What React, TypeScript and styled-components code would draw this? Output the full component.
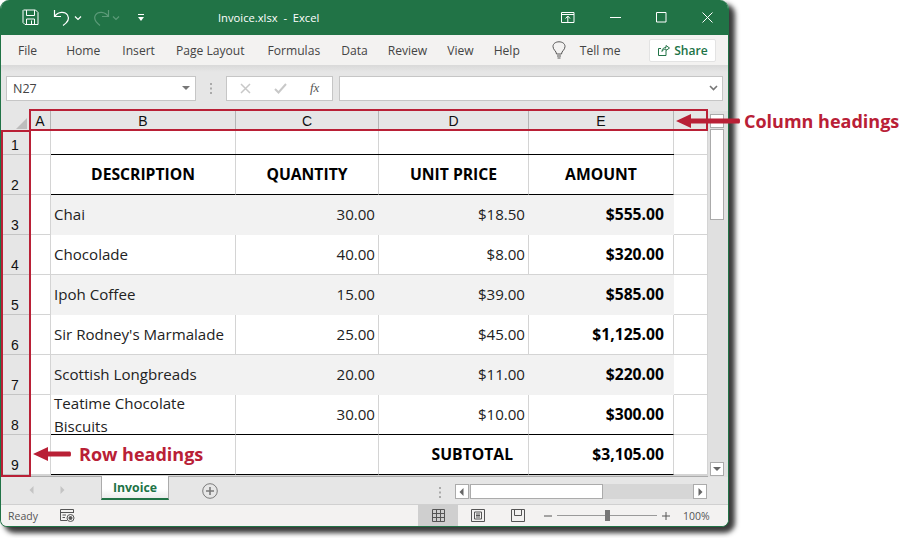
import styled, {createGlobalStyle} from 'styled-components'

const UI_FONT = '"Open Sans", "Noto Sans", sans-serif'
const GREEN = '#217346'
const RED = '#b92036'

const Global = createGlobalStyle`
  html, body { margin: 0; padding: 0; background: #fff; }
  body { font-family: ${UI_FONT}; }
`

const Page = styled.div`
  position: relative;
  width: 900px;
  height: 538px;
  overflow: hidden;
`

const Window = styled.div`
  width: 729px;
  height: 527px;
  display: flex;
  flex-direction: column;
  background: #e6e6e6;
  border-radius: 9px 9px 7px 7px;
  border: 1px solid ${GREEN};
  border-width: 0 1px 1px 1px;
  box-sizing: border-box;
  overflow: hidden;
`

const Shadow = styled.div`
  border-radius: 9px;
  width: 729px;
  height: 527px;
  box-shadow: 5px 5px 5px 1px rgba(25, 25, 25, 0.85);
`

const TitleBar = styled.div`
  height: 35px;
  flex: none;
  background: ${GREEN};
  display: flex;
  align-items: center;
  color: #fff;
  padding-left: 21px;
`

const QatIcon = styled.svg<{$gap?: number}>`
  flex: none;
  margin-right: ${p => p.$gap ?? 0}px;
`

const DocTitle = styled.div`
  font-size: 11.2px;
  white-space: pre;
  margin-left: 73px;
  width: 343px;
  flex: none;
`

const WinButtons = styled.div`
  display: flex;
  align-items: center;
  gap: 35px;
`

const TabsBar = styled.div`
  height: 30px;
  flex: none;
  background: #f3f2f1;
  display: flex;
  align-items: center;
  padding-left: 17px;
  font-size: 12.1px;
  color: #444;
`

const RibbonTab = styled.div<{$gap?: number}>`
  margin-right: ${p => p.$gap ?? 21}px;
  white-space: nowrap;
`

const ShareButton = styled.div`
  width: 67px;
  height: 23px;
  margin-left: 29px;
  box-sizing: border-box;
  background: #fff;
  border: 1px solid #e3e3e3;
  border-radius: 2px;
  display: flex;
  align-items: center;
  justify-content: center;
  gap: 4px;
  color: ${GREEN};
  font-weight: 600;
  font-size: 12.1px;
`

const FormulaBar = styled.div`
  height: 46px;
  flex: none;
  display: flex;
  align-items: center;
  padding: 0 5px 0 5px;
  background: linear-gradient(#d9d9d9, #e6e6e6 7px);
  box-sizing: border-box;
`

const FieldBox = styled.div<{$w?: number; $end?: boolean}>`
  height: 25px;
  box-sizing: border-box;
  background: #fff;
  border: 1px solid #c6c6c6;
  display: flex;
  align-items: center;
  ${p => (p.$w ? `width: ${p.$w}px; flex: none;` : 'flex: 1;')}
  ${p => (p.$end ? 'justify-content: flex-end; padding-right: 4px; margin-left: 6px;' : '')}
`

const NameText = styled.div`
  flex: 1;
  padding-left: 6px;
  font-size: 12.5px;
  color: #444;
`

const NameCaret = styled.div`
  margin-right: 5px;
  display: flex;
`

const Dots = styled.div`
  width: 30px;
  flex: none;
  display: flex;
  justify-content: center;
`

const FormulaButtons = styled.div`
  display: flex;
  align-items: center;
  gap: 23px;
  padding-left: 13px;
  color: #666;
`

const FxText = styled.span`
  font-family: "Liberation Serif", serif;
  font-style: italic;
  font-size: 13px;
  color: #555;
`

const SheetRow = styled.div`
  flex: 1;
  min-height: 0;
  display: flex;
`

const Grid = styled.div`
  width: 707px;
  flex: none;
  display: grid;
  grid-template-columns: 29px 21px 185px 143px 150px 145px 34px;
  grid-template-rows: 20px 24px repeat(8, 40px) 1px;
  overflow: hidden;
  background: #fff;
  border-bottom: 1px solid #ababab;
`

const Corner = styled.div`
  background: #e6e6e6;
  position: relative;
  &::after {
    content: "";
    position: absolute;
    right: 3px;
    bottom: 2px;
    border-style: solid;
    border-width: 0 0 11px 11px;
    border-color: transparent transparent #bdbdbd transparent;
  }
`

const ColHead = styled.div`
  background: #e6e6e6;
  border-right: 1px solid #b5b5b5;
  border-bottom: 1px solid #ababab;
  box-sizing: border-box;
  display: flex;
  align-items: center;
  justify-content: center;
  font-family: "Liberation Sans", sans-serif;
  font-size: 14px;
  color: #111;
`

const RowHead = styled.div`
  background: #e6e6e6;
  border-right: 1px solid #ababab;
  border-bottom: 1px solid #c4c4c4;
  box-sizing: border-box;
  display: flex;
  align-items: flex-end;
  justify-content: center;
  font-family: "Liberation Sans", sans-serif;
  font-size: 14px;
  line-height: 16px;
  padding-bottom: 1px;
  color: #111;
`

const Cell = styled.div<{
  $right?: boolean
  $center?: boolean
  $bold?: boolean
  $shade?: boolean
  $plainEdges?: boolean
  $topLine?: boolean
  $bottomLine?: boolean
  $pad?: number
}>`
  box-sizing: border-box;
  display: flex;
  align-items: center;
  justify-content: ${p => (p.$right ? 'flex-end' : p.$center ? 'center' : 'flex-start')};
  text-align: ${p => (p.$right ? 'right' : 'left')};
  padding: 0 ${p => (p.$right ? p.$pad ?? 3 : 3)}px 0 3px;
  background: ${p => (p.$shade ? '#f2f2f2' : '#fff')};
  border-right: 1px solid ${p => (p.$plainEdges ? 'transparent' : '#d4d4d4')};
  border-bottom: 1px solid ${p => (p.$bottomLine ? '#000' : p.$plainEdges ? 'transparent' : '#d4d4d4')};
  box-shadow: ${p => (p.$topLine ? '0 -1px 0 #000' : 'none')};
  font-size: ${p => (p.$bold ? 15.7 : 15.1)}px;
  font-weight: ${p => (p.$bold ? 700 : 400)};
  line-height: 23px;
  color: ${p => (p.$bold ? '#000' : '#222')};
`

const VScroll = styled.div`
  flex: 1;
  background: #e0e0e0;
  display: flex;
  flex-direction: column;
  align-items: center;
  padding: 3px 2px 1px 0;
  box-sizing: border-box;
`

const ScrollBtn = styled.div`
  width: 14px;
  height: 14px;
  flex: none;
  background: #fff;
  border: 1px solid #ababab;
  box-sizing: border-box;
  display: flex;
  align-items: center;
  justify-content: center;
`

const ScrollThumb = styled.div`
  width: 14px;
  height: 91px;
  margin-top: 1px;
  background: #fff;
  border: 1px solid #ababab;
  box-sizing: border-box;
`

const ScrollFill = styled.div`
  flex: 1;
`

const TabsRow = styled.div`
  height: 28px;
  flex: none;
  display: flex;
  align-items: flex-start;
  background: #e6e6e6;
  border-bottom: 1px solid #d0d0d0;
  box-sizing: border-box;
`

const NavArrows = styled.div`
  width: 100px;
  flex: none;
  display: flex;
  align-items: center;
  gap: 22px;
  padding: 9px 0 0 27px;
  box-sizing: border-box;
`

const SheetTab = styled.div`
  width: 68px;
  height: 24px;
  margin-top: -1px;
  box-sizing: border-box;
  background: linear-gradient(#fff, #fff 60%, #ececec);
  border: 1px solid #ababab;
  border-top: none;
  border-bottom: 2px solid ${GREEN};
  color: ${GREEN};
  font-weight: 700;
  font-size: 12.3px;
  display: flex;
  align-items: center;
  justify-content: center;
`

const AddSheet = styled.div`
  margin: 5px 0 0 33px;
  width: 16px;
  height: 16px;
  flex: none;
`

const TabDots = styled.div`
  margin: 4px 0 0 221px;
  width: 2px;
  flex: none;
`

const HScroll = styled.div`
  margin: 7px 0 0 14px;
  width: 252px;
  height: 15px;
  flex: none;
  display: flex;
  background: #d6d6d6;
`

const HButton = styled.div`
  width: 14px;
  height: 15px;
  flex: none;
  background: #fff;
  border: 1px solid #ababab;
  box-sizing: border-box;
  display: flex;
  align-items: center;
  justify-content: center;
`

const HThumb = styled.div`
  width: 133px;
  flex: none;
  margin-left: 1px;
  background: #fff;
  border: 1px solid #ababab;
  box-sizing: border-box;
`

const HFill = styled.div`
  flex: 1;
`

const StatusBar = styled.div`
  height: 21px;
  flex: none;
  display: flex;
  align-items: center;
  background: #f3f2f1;
  font-size: 10.5px;
  color: #555;
  padding-left: 7px;
`

const StatusText = styled.div<{$w: number; $left?: number}>`
  width: ${p => p.$w}px;
  margin-left: ${p => p.$left ?? 0}px;
  flex: none;
`

const ViewButton = styled.div<{$active?: boolean}>`
  width: 40px;
  height: 100%;
  flex: none;
  display: flex;
  align-items: center;
  justify-content: center;
  background: ${p => (p.$active ? '#cfcfcf' : 'transparent')};
`

const ZoomSlider = styled.div`
  position: relative;
  width: 100px;
  height: 1px;
  margin: 0 5px;
  background: #9a9a9a;
  flex: none;
  &::after {
    content: "";
    position: absolute;
    left: 48px;
    top: -5px;
    width: 5px;
    height: 11px;
    background: #777;
  }
`

const ViewGroup = styled.div`
  display: flex;
  height: 100%;
  margin-left: 343px;
  margin-right: 6px;
  flex: none;
`

const HeadingFrame = styled.div<{$x: number; $y: number; $w: number; $h: number}>`
  position: absolute;
  left: ${p => p.$x}px;
  top: ${p => p.$y}px;
  width: ${p => p.$w}px;
  height: ${p => p.$h}px;
  border: 2px solid ${RED};
  box-sizing: border-box;
`

const Callout = styled.div<{$x: number; $y: number}>`
  position: absolute;
  left: ${p => p.$x}px;
  top: ${p => p.$y}px;
  display: flex;
  align-items: center;
  gap: 4px;
  color: ${RED};
  font-weight: 700;
  font-size: 18px;
  line-height: 24px;
  white-space: nowrap;
`

const ArrowSvg = styled.svg`
  flex: none;
`

const Arrow = ({w}: {w: number}) => (
  <ArrowSvg width={w} height={14} viewBox={`0 0 ${w} 14`}>
    <path d={`M0 7 L15 0 V4.5 H${w - 1} Q${w} 4.5 ${w} 7 Q${w} 9.5 ${w - 1} 9.5 H15 V14 Z`} fill={RED} />
  </ArrowSvg>
)

const Tri = ({dir, color = '#666'}: {dir: 'up' | 'down' | 'left' | 'right'; color?: string}) => {
  const d = {
    up: 'M0 5 L4 1 L8 5 Z',
    down: 'M0 2 H8 L4 6 Z',
    left: 'M5.5 0 V8 L1.5 4 Z',
    right: 'M2.5 0 V8 L6.5 4 Z'
  }[dir]
  return (
    <svg width={8} height={8} viewBox="0 0 8 8">
      <path d={d} fill={color} />
    </svg>
  )
}

const GripDots = () => (
  <svg width={2} height={11} viewBox="0 0 2 11" fill="#aaa">
    <path d="M0 0 H2 V2 H0 Z M0 4.5 H2 V6.5 H0 Z M0 9 H2 V11 H0 Z" />
  </svg>
)

const columns = ['A', 'B', 'C', 'D', 'E', '']

const items = [
  {name: 'Chai', qty: '30.00', price: '$18.50', amount: '$555.00'},
  {name: 'Chocolade', qty: '40.00', price: '$8.00', amount: '$320.00'},
  {name: 'Ipoh Coffee', qty: '15.00', price: '$39.00', amount: '$585.00'},
  {name: "Sir Rodney's Marmalade", qty: '25.00', price: '$45.00', amount: '$1,125.00'},
  {name: 'Scottish Longbreads', qty: '20.00', price: '$11.00', amount: '$220.00'},
  {name: 'Teatime Chocolate Biscuits', qty: '30.00', price: '$10.00', amount: '$300.00'}
]

const tabs: [string, number][] = [
  ['File', 29],
  ['Home', 22],
  ['Insert', 21],
  ['Page Layout', 23],
  ['Formulas', 21],
  ['Data', 20],
  ['Review', 20],
  ['View', 20],
  ['Help', 32]
]

const App = () => {
  return (
    <Page>
      <Global />
      <Shadow>
        <Window>
          <TitleBar>
            <QatIcon $gap={14} width={17} height={17} viewBox="0 0 17 17" fill="none" stroke="#fff" strokeWidth="1">
              <path d="M1.5 1 H13.5 L16 3.5 V15.5 H3 L1 13.5 V1.5 Z" />
              <path d="M4.5 1 V6.5 H12.5 V1 M4.5 15.5 V10 H12.5 V15.5 M9.5 11.5 V15" />
            </QatIcon>
            <QatIcon $gap={2} width={19} height={18} viewBox="0 0 19 18" fill="none" stroke="#fff" strokeWidth="1.2">
              <path d="M1.5 1 V7.5 H8 M1.8 7.2 C5 2.5 12 2 14.5 6 C16.5 9.5 14.5 13.5 10 16.5" />
            </QatIcon>
            <QatIcon $gap={11} width={8} height={6} viewBox="0 0 8 6" fill="none" stroke="#fff" strokeWidth="1.2">
              <path d="M1 1.5 L4 4.5 L7 1.5" />
            </QatIcon>
            <QatIcon $gap={2} width={17} height={18} viewBox="0 0 17 18" fill="none" stroke="#5b9a78" strokeWidth="1.2">
              <path d="M15.5 1 V7.5 H9 M15.2 7.2 C12 2.5 5 2 2.5 6 C0.5 9.5 3 13.5 7 16.5" />
            </QatIcon>
            <QatIcon $gap={17} width={8} height={6} viewBox="0 0 8 6" fill="none" stroke="#5b9a78" strokeWidth="1.2">
              <path d="M1 1.5 L4 4.5 L7 1.5" />
            </QatIcon>
            <QatIcon width={8} height={8} viewBox="0 0 8 8" fill="#fff">
              <path d="M1 0 H7 V1 H1 Z M1 3 H7 L4 7 Z" />
            </QatIcon>
            <DocTitle>{'Invoice.xlsx  -  Excel'}</DocTitle>
            <WinButtons>
              <svg width={14} height={11} viewBox="0 0 14 11" fill="none" stroke="#fff" strokeWidth="1">
                <path d="M.5 .5 H13 V10.5 H.5 Z M.5 2.5 H13 M4.5 6.5 L6.8 4 L9 6.5 M6.8 4.5 V10" />
              </svg>
              <svg width={11} height={11} viewBox="0 0 11 11" stroke="#fff" strokeWidth="1">
                <path d="M0 5.5 H11" />
              </svg>
              <svg width={11} height={11} viewBox="0 0 11 11" fill="none" stroke="#fff" strokeWidth="1">
                <path d="M.5 .5 H10 V10 H.5 Z" />
              </svg>
              <svg width={11} height={11} viewBox="0 0 11 11" fill="none" stroke="#fff" strokeWidth="1">
                <path d="M.5 .5 L10.5 10.5 M10.5 .5 L.5 10.5" />
              </svg>
            </WinButtons>
          </TitleBar>

          <TabsBar>
            {tabs.map(([label, gap]) => (
              <RibbonTab key={label} $gap={gap}>{label}</RibbonTab>
            ))}
            <QatIcon $gap={14} width={14} height={18} viewBox="0 0 14 18" fill="none" stroke="#555" strokeWidth="1">
              <path d="M4.5 13 C4.5 10 1 9 1 5.5 C1 2.5 3.8 .8 7 .8 C10.2 .8 13 2.5 13 5.5 C13 9 9.5 10 9.5 13 Z M5 15 H9 M5.5 17 H8.5" />
            </QatIcon>
            <RibbonTab $gap={0}>Tell me</RibbonTab>
            <ShareButton>
              <svg width={12} height={12} viewBox="0 0 12 12" fill="none" stroke={GREEN} strokeWidth="1">
                <path d="M8 6.5 V11.5 H.5 V4.5 H3 M4 7.5 C4 4.5 6 3.5 8 3.5 V1.5 L11.5 4 L8 6.5 V5 C6.5 5 5 5.5 4 7.5 Z" />
              </svg>
              Share
            </ShareButton>
          </TabsBar>

          <FormulaBar>
            <FieldBox $w={190}>
              <NameText>N27</NameText>
              <NameCaret><Tri dir="down" color="#777" /></NameCaret>
            </FieldBox>
            <Dots><GripDots /></Dots>
            <FieldBox $w={107}>
              <FormulaButtons>
                <svg width={11} height={11} viewBox="0 0 11 11" fill="none" stroke="#c8c8c8" strokeWidth="1.5">
                  <path d="M1 1 L10 10 M10 1 L1 10" />
                </svg>
                <svg width={13} height={11} viewBox="0 0 13 11" fill="none" stroke="#c8c8c8" strokeWidth="2">
                  <path d="M1 6 L4.5 9.5 L12 1" />
                </svg>
                <FxText>fx</FxText>
              </FormulaButtons>
            </FieldBox>
            <FieldBox $end>
              <svg width={9} height={6} viewBox="0 0 9 6" fill="none" stroke="#777" strokeWidth="1.6">
                <path d="M1 1 L4.5 4.5 L8 1" />
              </svg>
            </FieldBox>
          </FormulaBar>

          <SheetRow>
            <Grid>
              <Corner />
              {columns.map((c, i) => (
                <ColHead key={i}>{c}</ColHead>
              ))}

              <RowHead>1</RowHead>
              <Cell /><Cell /><Cell /><Cell /><Cell /><Cell />

              <RowHead>2</RowHead>
              <Cell />
              <Cell $center $bold $topLine $bottomLine>DESCRIPTION</Cell>
              <Cell $center $bold $topLine $bottomLine>QUANTITY</Cell>
              <Cell $center $bold $topLine $bottomLine>UNIT PRICE</Cell>
              <Cell $center $bold $topLine $bottomLine>AMOUNT</Cell>
              <Cell />

              {items.map((item, i) => {
                const shade = i % 2 === 0
                const last = i === items.length - 1
                return [
                  <RowHead key={`h${i}`}>{i + 3}</RowHead>,
                  <Cell key={`a${i}`} />,
                  <Cell key={`n${i}`} $shade={shade} $plainEdges={shade} $bottomLine={last}>{item.name}</Cell>,
                  <Cell key={`q${i}`} $right $shade={shade} $plainEdges={shade} $bottomLine={last}>{item.qty}</Cell>,
                  <Cell key={`p${i}`} $right $shade={shade} $plainEdges={shade} $bottomLine={last}>{item.price}</Cell>,
                  <Cell key={`t${i}`} $right $bold $pad={9} $shade={shade} $plainEdges={shade} $bottomLine={last}>{item.amount}</Cell>,
                  <Cell key={`e${i}`} />
                ]
              })}

              <RowHead>9</RowHead>
              <Cell />
              <Cell $bottomLine />
              <Cell $bottomLine />
              <Cell $right $bold $pad={15} $bottomLine>SUBTOTAL</Cell>
              <Cell $right $bold $pad={9} $bottomLine>$3,105.00</Cell>
              <Cell />

              <RowHead />
              <Cell /><Cell /><Cell /><Cell /><Cell /><Cell />
            </Grid>
            <VScroll>
              <ScrollBtn><Tri dir="up" color="#fff" /></ScrollBtn>
              <ScrollThumb />
              <ScrollFill />
              <ScrollBtn><Tri dir="down" /></ScrollBtn>
            </VScroll>
          </SheetRow>

          <TabsRow>
            <NavArrows>
              <Tri dir="left" color="#c4c4c4" />
              <Tri dir="right" color="#c4c4c4" />
            </NavArrows>
            <SheetTab>Invoice</SheetTab>
            <AddSheet>
              <svg width={16} height={16} viewBox="0 0 16 16" fill="none" stroke="#7a7a7a">
                <circle cx="8" cy="8" r="7.3" />
                <path d="M8 4 V12 M4 8 H12" strokeWidth="1.6" />
              </svg>
            </AddSheet>
            <TabDots><GripDots /></TabDots>
            <HScroll>
              <HButton><Tri dir="left" /></HButton>
              <HThumb />
              <HFill />
              <HButton><Tri dir="right" /></HButton>
            </HScroll>
          </TabsRow>

          <StatusBar>
            <StatusText $w={52}>Ready</StatusText>
            <svg width={15} height={13} viewBox="0 0 15 13" fill="none" stroke="#555" strokeWidth="1">
              <path d="M.5 .5 H13.5 V4 M.5 .5 V11.5 H7 M.5 3.5 H13.5 M2.5 6 H6 M2.5 8.5 H5" />
              <circle cx="10.5" cy="9" r="3.5" />
              <circle cx="10.5" cy="9" r="1.5" fill="#555" />
            </svg>
            <ViewGroup>
              <ViewButton $active>
                <svg width={13} height={13} viewBox="0 0 13 13" fill="none" stroke="#555">
                  <path d="M.5 .5 H12.5 V12.5 H.5 Z M.5 4.5 H12.5 M.5 8.5 H12.5 M4.5 .5 V12.5 M8.5 .5 V12.5" />
                </svg>
              </ViewButton>
              <ViewButton>
                <svg width={14} height={13} viewBox="0 0 14 13" fill="none" stroke="#555">
                  <path d="M.5 .5 H13.5 V12.5 H.5 Z M3.5 3 H10.5 V10 H3.5 Z M5 5 H9 M5 6.5 H9 M5 8 H9" />
                </svg>
              </ViewButton>
              <ViewButton>
                <svg width={14} height={13} viewBox="0 0 14 13" fill="none" stroke="#555">
                  <path d="M.5 .5 H13.5 V12.5 H.5 Z M.5 7.5 H.5 M3.5 .5 V6.5 H10.5 V.5" />
                </svg>
              </ViewButton>
            </ViewGroup>
            <svg width={8} height={8} viewBox="0 0 8 8" stroke="#555">
              <path d="M0 4 H8" />
            </svg>
            <ZoomSlider />
            <svg width={8} height={8} viewBox="0 0 8 8" stroke="#555">
              <path d="M0 4 H8 M4 0 V8" />
            </svg>
            <StatusText $w={30} $left={13}>100%</StatusText>
          </StatusBar>
        </Window>
      </Shadow>

      <HeadingFrame $x={29} $y={109} $w={679} $h={22} />
      <HeadingFrame $x={1} $y={130} $w={30} $h={347} />
      <Callout $x={676} $y={109}>
        <Arrow w={64} />
        <span>Column headings</span>
      </Callout>
      <Callout $x={33} $y={442}>
        <Arrow w={38} />
        <span style={{marginLeft: 4}}>Row headings</span>
      </Callout>
    </Page>
  )
}

export default App
